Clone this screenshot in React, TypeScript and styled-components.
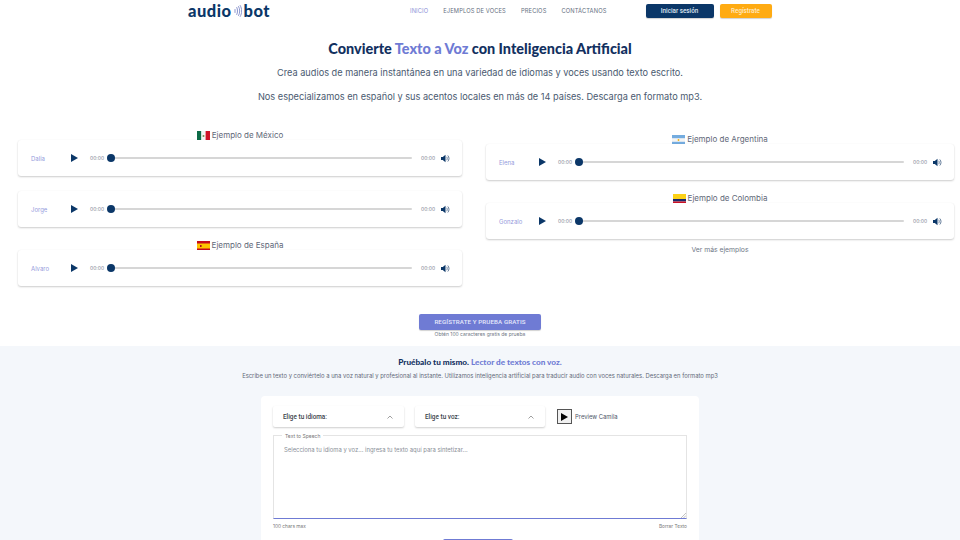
import React from "react";
import styled, { createGlobalStyle } from "styled-components";

const Global = createGlobalStyle`
  html, body { margin: 0; padding: 0; background: #fff; height: 540px; overflow: hidden; }
  body { font-family: "Inter", "Liberation Sans", sans-serif; color: #4a5568; }
  * { box-sizing: border-box; }
`;

const NAVY = "#0b3768";
const PURPLE = "#6f7bd4";

const Page = styled.div`
  width: 960px;
  display: flex;
  flex-direction: column;
`;
const Header = styled.header`
  height: 21px;
  display: flex;
  align-items: center;
  padding-left: 188px;
`;
const Logo = styled.div`
  width: 82px;
  display: flex;
  align-items: center;
  font-family: "Lato", sans-serif;
  font-weight: 900;
  font-size: 16.5px;
  line-height: 14px;
  color: ${NAVY};
  letter-spacing: 0.5px;
`;
const Nav = styled.nav`
  margin-left: 140px;
  display: flex;
  gap: 15px;
`;
const NavLink = styled.a<{ $active?: boolean }>`
  font-size: 5.75px;
  line-height: 8px;
  letter-spacing: 0.12px;
  white-space: nowrap;
  color: ${(p) => (p.$active ? "#8d94d8" : "#66707f")};
`;
const HeaderBtn = styled.button<{ $bg: string; $w: number; $ml: number; $fg: string }>`
  width: ${(p) => p.$w}px;
  height: 14px;
  margin-left: ${(p) => p.$ml}px;
  border: 0;
  border-radius: 2px;
  padding: 0;
  font-family: "Roboto", sans-serif;
  font-weight: 500;
  font-size: 6.3px;
  color: ${(p) => p.$fg};
  background: ${(p) => p.$bg};
  box-shadow: 0 1px 1px rgba(0, 0, 0, 0.18);
`;
const Hero = styled.section`
  padding-top: 20px;
  display: flex;
  flex-direction: column;
  align-items: center;
`;
const Title = styled.h1`
  margin: 0;
  font-family: "Lato", sans-serif;
  font-weight: 900;
  font-size: 14.45px;
  line-height: 16px;
  color: #12305f;
  white-space: nowrap;
`;
const Accent = styled.span`
  color: ${PURPLE};
`;
const Lead = styled.p<{ $mt: number }>`
  margin: ${(p) => p.$mt}px 0 0;
  font-size: 9.2px;
  line-height: 12px;
  color: #4a5a70;
  white-space: nowrap;
`;
const Examples = styled.section`
  margin-top: 26px;
  padding: 0 6px 0 18px;
  display: grid;
  grid-template-columns: 444px 468px;
  column-gap: 24px;
  align-items: start;
`;
const Column = styled.div<{ $pt: number }>`
  padding-top: ${(p) => p.$pt}px;
  display: flex;
  flex-direction: column;
`;
const Heading = styled.div<{ $mt?: number }>`
  height: 11px;
  margin-top: ${(p) => p.$mt ?? 0}px;
  padding-top: 2px;
  display: flex;
  align-items: center;
  justify-content: center;
  gap: 2px;
  font-size: 8px;
  line-height: 9px;
  color: #5f6878;
`;
const Card = styled.div<{ $mt?: number }>`
  height: 36px;
  margin-top: ${(p) => p.$mt ?? 0}px;
  padding: 0 12px 0 13px;
  display: flex;
  align-items: center;
  background: #fff;
  border-radius: 3px;
  box-shadow: 0 1px 2px rgba(0, 0, 0, 0.2), 0 0 1px rgba(0, 0, 0, 0.05);
`;
const Name = styled.span`
  width: 40px;
  font-size: 6px;
  color: #959bdc;
`;
const PlayIcon = styled.svg`
  width: 7px;
  height: 8px;
  flex: none;
  fill: ${NAVY};
`;
const Time = styled.span<{ $ml?: number }>`
  font-size: 5px;
  color: #7a8290;
  width: 13px;
  margin-left: ${(p) => p.$ml ?? 0}px;
  flex: none;
  white-space: nowrap;
`;
const Track = styled.div`
  position: relative;
  flex: 1;
  height: 2.5px;
  margin: 0 9px 0 8px;
  background: #d6d6d6;
  border-radius: 2px;
`;
const Thumb = styled.span`
  position: absolute;
  left: -4px;
  top: -2.75px;
  width: 8px;
  height: 8px;
  border-radius: 50%;
  background: ${NAVY};
`;
const VolumeIcon = styled.svg`
  width: 9px;
  height: 9px;
  margin-left: 7px;
  flex: none;
`;
const More = styled.div`
  margin-top: 7px;
  text-align: center;
  font-size: 6.8px;
  line-height: 8px;
  color: #6f7886;
`;
const Cta = styled.div`
  margin-top: 28px;
  display: flex;
  flex-direction: column;
  align-items: center;
`;
const CtaButton = styled.button`
  width: 122px;
  height: 16px;
  padding: 0;
  border: 0;
  border-radius: 2px;
  background: ${PURPLE};
  color: #e6e9fb;
  font-family: "Roboto", sans-serif;
  font-weight: 500;
  font-size: 6.2px;
  letter-spacing: 0.1px;
  box-shadow: 0 1px 1px rgba(0, 0, 0, 0.18);
`;
const CtaNote = styled.div`
  margin-top: 1px;
  font-size: 5px;
  line-height: 6px;
  color: #6f7886;
`;
const Demo = styled.section`
  margin-top: 9px;
  padding-top: 11px;
  height: 300px;
  background: #f4f7fb;
  display: flex;
  flex-direction: column;
  align-items: center;
`;
const DemoTitle = styled.h2`
  margin: 0;
  font-family: "Lato", sans-serif;
  font-weight: 900;
  font-size: 8.2px;
  line-height: 10px;
  color: #12305f;
`;
const DemoText = styled.p`
  margin: 5px 0 0;
  font-size: 5.88px;
  line-height: 8px;
  color: #5f6878;
  white-space: nowrap;
`;
const Panel = styled.div`
  width: 438px;
  margin-top: 16px;
  height: 200px;
  padding: 10px 12px;
  background: #fff;
  border-radius: 4px;
`;
const Controls = styled.div`
  display: flex;
  align-items: center;
`;
const Select = styled.div<{ $w: number; $ml?: number }>`
  width: ${(p) => p.$w}px;
  height: 21px;
  margin-left: ${(p) => p.$ml ?? 0}px;
  padding: 0 11px 0 10px;
  display: flex;
  align-items: center;
  justify-content: space-between;
  font-family: "Roboto", sans-serif;
  font-weight: 500;
  font-size: 6.4px;
  color: #3a3f4a;
  border-radius: 2px;
  box-shadow: 0 1px 2px rgba(0, 0, 0, 0.2);
`;
const Chevron = styled.svg`
  width: 6px;
  height: 4px;
  fill: none;
  stroke: #777;
  stroke-width: 0.7;
`;
const PreviewBox = styled.div`
  width: 15px;
  height: 15px;
  margin-left: 12px;
  display: flex;
  align-items: center;
  justify-content: center;
  background: #f0f0f0;
  border: 1px solid #555;
`;
const PreviewPlay = styled.svg`
  width: 7px;
  height: 8px;
  fill: #000;
`;
const PreviewLabel = styled.span`
  margin-left: 3px;
  font-size: 5.9px;
  color: #4d5568;
`;
const Field = styled.div`
  position: relative;
  height: 84px;
  margin-top: 8px;
  padding: 10px 10px;
  border: 1px solid #e4e4e4;
  border-bottom: 1px solid ${PURPLE};
  font-size: 5.9px;
  line-height: 8px;
  color: #8a8f98;
`;
const Legend = styled.span`
  position: absolute;
  left: 8px;
  top: -3px;
  padding: 0 3px;
  background: #fff;
  font-size: 5px;
  line-height: 6px;
  color: #777;
`;
const Resize = styled.svg`
  position: absolute;
  right: 0;
  bottom: 0;
  width: 5px;
  height: 5px;
  stroke: #999;
  stroke-width: 0.6;
`;
const FieldFoot = styled.div`
  margin-top: 4px;
  display: flex;
  justify-content: space-between;
  font-size: 4.8px;
  line-height: 6px;
  color: #777;
`;
const Submit = styled.div`
  width: 70px;
  height: 16px;
  margin: 10px 0 0 170px;
  background: ${PURPLE};
  border-radius: 2px;
`;

const FlagSvg = styled.svg`
  width: 13px;
  height: 10px;
  flex: none;
`;

const Mexico = () => (
  <FlagSvg viewBox="0 0 13 10">
    <rect width="4.4" height="10" fill="#0d6b47" />
    <rect x="4.4" width="4.2" height="10" fill="#f4f4f4" />
    <rect x="8.6" width="4.4" height="10" fill="#ce1126" />
    <circle cx="6.5" cy="5" r="1" fill="#7a8a4a" />
  </FlagSvg>
);
const Spain = () => (
  <FlagSvg viewBox="0 0 13 10">
    <rect width="13" height="10" fill="#c60b1e" />
    <rect y="2.5" width="13" height="5" fill="#ffc400" />
    <rect x="3" y="4" width="1.6" height="2" fill="#ad1519" />
  </FlagSvg>
);
const Argentina = () => (
  <FlagSvg viewBox="0 0 13 10">
    <rect width="13" height="10" fill="#f4f4f4" />
    <rect width="13" height="3.2" fill="#74acdf" />
    <rect y="6.8" width="13" height="3.2" fill="#74acdf" />
    <circle cx="6.5" cy="5" r="0.9" fill="#f6b40e" />
  </FlagSvg>
);
const Colombia = () => (
  <FlagSvg viewBox="0 0 13 10">
    <rect width="13" height="5" fill="#fcd116" />
    <rect y="5" width="13" height="2.5" fill="#1a2a6c" />
    <rect y="7.5" width="13" height="2.5" fill="#ce1126" />
  </FlagSvg>
);

const WaveSvg = styled.svg`
  width: 8px;
  height: 14px;
  margin: 0 2px;
  flex: none;
  fill: none;
  stroke: #7f8ac8;
  stroke-width: 0.9;
  stroke-linecap: round;
`;

const Waves = () => (
  <WaveSvg viewBox="0 0 8 14">
    <path d="M1 5.500v3" />
    <path d="M2.800 3.500c1 2 1 5 0 7" />
    <path d="M4.600 2.500c1.500 2.800 1.500 6.200 0 9" />
    <path d="M6.200 1.500c2 3.500 2 7.500 0 11" />
  </WaveSvg>
);

const Player = ({ name, mt }: { name: string; mt?: number }) => (
  <Card $mt={mt}>
    <Name>{name}</Name>
    <PlayIcon viewBox="0 0 7 8">
      <path d="M0 0l7 4-7 4z" />
    </PlayIcon>
    <Time $ml={12}>00:00</Time>
    <Track>
      <Thumb />
    </Track>
    <Time>00:00</Time>
    <VolumeIcon viewBox="0 0 9 9">
      <path d="M0 3h1.800L4.500 .8v7.400L1.800 6H0z" fill={NAVY} />
      <path d="M5.600 2.800c.8.900.8 2.500 0 3.400M6.800 1.500c1.600 1.800 1.600 4.200 0 6" fill="none" stroke="#3c5a80" strokeWidth="0.8" />
    </VolumeIcon>
  </Card>
);

export default function App() {
  return (
    <Page>
      <Global />
      <Header>
        <Logo>
          audio
          <Waves />
          bot
        </Logo>
        <Nav>
          <NavLink $active>INICIO</NavLink>
          <NavLink>EJEMPLOS DE VOCES</NavLink>
          <NavLink>PRECIOS</NavLink>
          <NavLink>CONTÁCTANOS</NavLink>
        </Nav>
        <HeaderBtn $bg={NAVY} $fg="#dfe6f0" $w={68} $ml={39}>Iniciar sesión</HeaderBtn>
        <HeaderBtn $bg="#ffab12" $fg="#ffe9c0" $w={52} $ml={6}>Regístrate</HeaderBtn>
      </Header>
      <Hero>
        <Title>
          Convierte <Accent>Texto a Voz</Accent> con Inteligencia Artificial
        </Title>
        <Lead $mt={10}>Crea audios de manera instantánea en una variedad de idiomas y voces usando texto escrito.</Lead>
        <Lead $mt={12}>Nos especializamos en español y sus acentos locales en más de 14 países. Descarga en formato mp3.</Lead>
      </Hero>
      <Examples>
        <Column $pt={0}>
          <Heading><Mexico />Ejemplo de México</Heading>
          <Player name="Dalia" />
          <Player name="Jorge" mt={15} />
          <Heading $mt={12}><Spain />Ejemplo de España</Heading>
          <Player name="Alvaro" />
        </Column>
        <Column $pt={4}>
          <Heading><Argentina />Ejemplo de Argentina</Heading>
          <Player name="Elena" />
          <Heading $mt={12}><Colombia />Ejemplo de Colombia</Heading>
          <Player name="Gonzalo" />
          <More>Ver más ejemplos</More>
        </Column>
      </Examples>
      <Cta>
        <CtaButton>REGÍSTRATE Y PRUEBA GRATIS</CtaButton>
        <CtaNote>Obtén 100 caracteres gratis de prueba</CtaNote>
      </Cta>
      <Demo>
        <DemoTitle>
          Pruébalo tu mismo. <Accent>Lector de textos con voz.</Accent>
        </DemoTitle>
        <DemoText>
          Escribe un texto y conviértelo a una voz natural y profesional al instante. Utilizamos inteligencia artificial para traducir audio con voces naturales. Descarga en formato mp3
        </DemoText>
        <Panel>
          <Controls>
            <Select $w={131}>
              Elige tu idioma:
              <Chevron viewBox="0 0 6 4"><path d="M.5 3.500L3 1l2.500 2.500" /></Chevron>
            </Select>
            <Select $w={130} $ml={11}>
              Elige tu voz:
              <Chevron viewBox="0 0 6 4"><path d="M.5 3.500L3 1l2.500 2.500" /></Chevron>
            </Select>
            <PreviewBox>
              <PreviewPlay viewBox="0 0 7 8"><path d="M0 0l7 4-7 4z" /></PreviewPlay>
            </PreviewBox>
            <PreviewLabel>Preview Camila</PreviewLabel>
          </Controls>
          <Field>
            <Legend>Text to Speech</Legend>
            Selecciona tu idioma y voz... ingresa tu texto aquí para sintetizar...
            <Resize viewBox="0 0 5 5"><path d="M5 0L0 5M5 2.500L2.500 5" /></Resize>
          </Field>
          <FieldFoot>
            <span>100 chars max</span>
            <span>Borrar Texto</span>
          </FieldFoot>
          <Submit />
        </Panel>
      </Demo>
    </Page>
  );
}
